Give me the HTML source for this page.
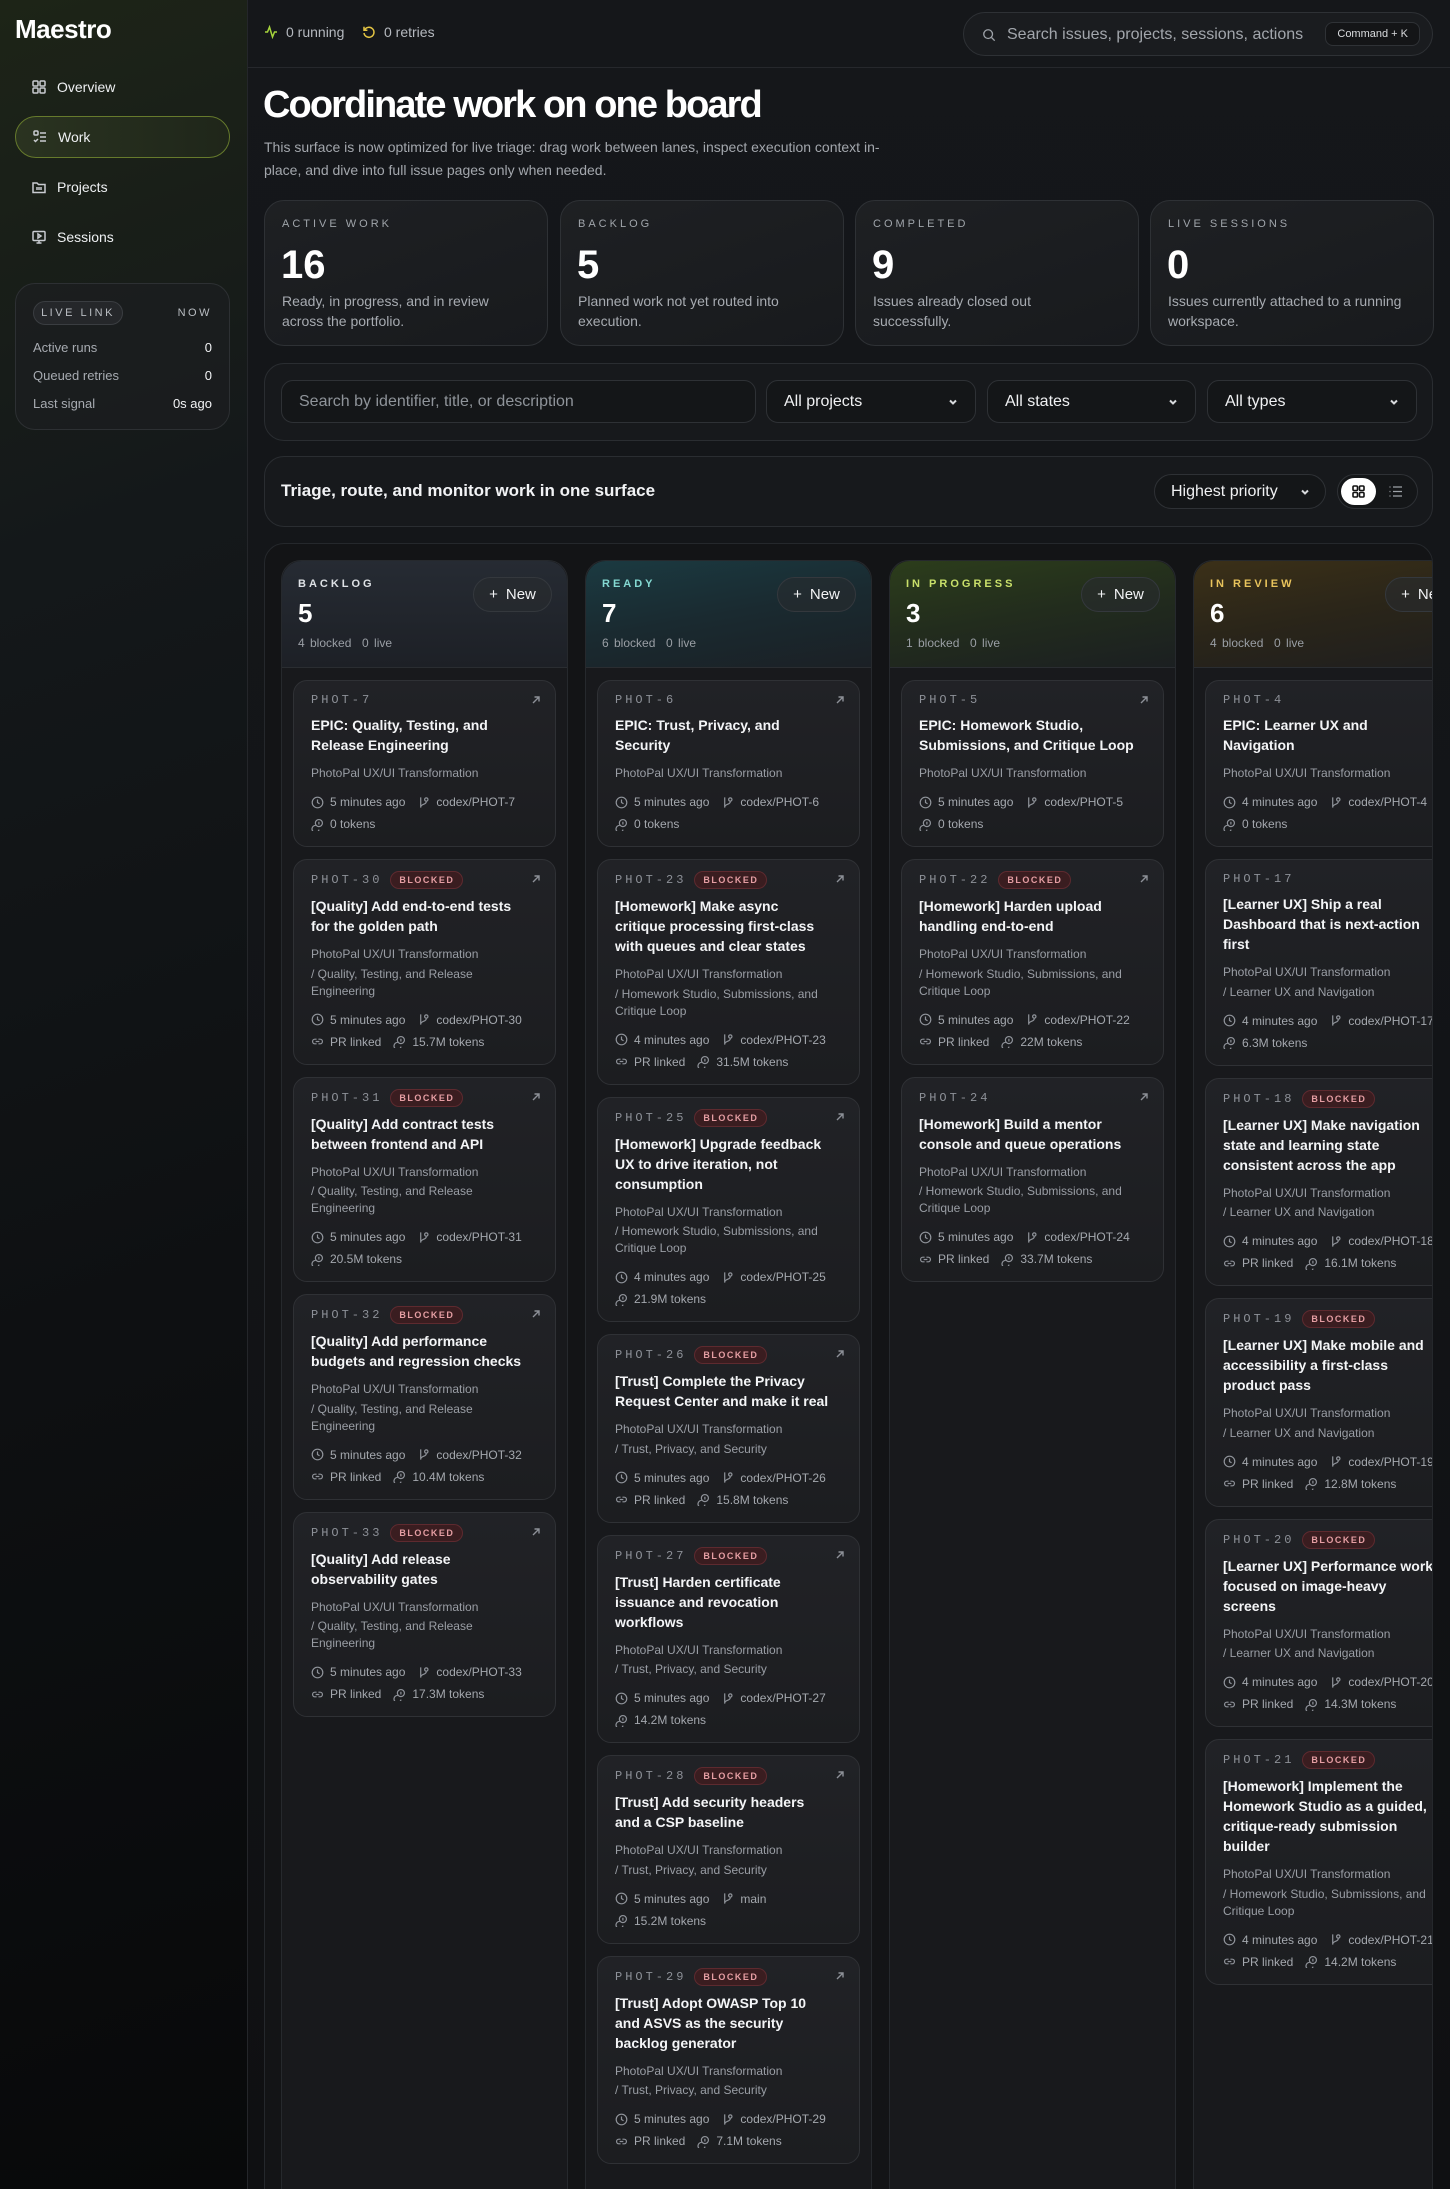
<!DOCTYPE html>
<html><head><meta charset="utf-8">
<style>
*{box-sizing:border-box;margin:0;padding:0}
html,body{width:1450px;height:2189px;overflow:hidden}
body{font-family:"Liberation Sans",Arial,sans-serif;background:#111214;color:#e8eaed;position:relative}
.abs{position:absolute}
#side{left:0;top:0;width:248px;height:2189px;border-right:1px solid #24262a;background:linear-gradient(160deg,#1d2417 0%,#14181a 25%,#0e1012 60%,#08090a 100%)}
#main{left:248px;top:0;width:1202px;height:2189px;background:linear-gradient(180deg,#15171a 0%,#131518 40%,#0f1012 100%)}
.logo{left:15px;top:14px;font-size:26px;font-weight:700;color:#fff;letter-spacing:-0.5px}
.nav{left:15px;width:215px;height:42px;display:flex;align-items:center;padding-left:16px;font-size:14px;color:#eef0f2;gap:10px}
.nav svg{width:16px;height:16px;stroke:#c9ccd1;fill:none;stroke-width:1.5}
.nav.active{border:1px solid #667a2c;border-radius:21px;background:linear-gradient(90deg,#2a3320,#1f261a)}
.live{left:15px;top:283px;width:215px;height:147px;border:1px solid #2d3033;border-radius:20px;background:rgba(28,30,33,.7)}
.pill{position:absolute;left:17px;top:17px;height:24px;width:90px;border:1px solid #3a3d41;border-radius:12px;background:#25272a;font-size:11px;letter-spacing:2.5px;color:#b9bdc2;display:flex;align-items:center;justify-content:center}
.now{position:absolute;right:17px;top:23px;font-size:11px;letter-spacing:2.5px;color:#b9bdc2}
.lrow{position:absolute;left:17px;right:17px;display:flex;justify-content:space-between;font-size:13px;color:#a7abb1}
.lrow b{font-weight:400;color:#f2f3f5}
#topline{left:248px;top:67px;width:1202px;height:1px;background:#26282c}
.tstat{top:24px;font-size:14px;color:#b5b9bf;display:flex;align-items:center;gap:8px}
.search{left:963px;top:12px;width:470px;height:44px;border:1px solid #2e3135;border-radius:22px;background:#1a1c1f}
.kbd{position:absolute;right:12px;top:9px;height:24px;padding:0 11px;border:1px solid #2f3236;border-radius:8px;background:#141517;font-size:11px;color:#d9dbde;display:flex;align-items:center}
h1{position:absolute;left:263px;top:84px;font-size:38px;font-weight:700;letter-spacing:-1.9px;color:#fff}
.desc{left:264px;top:136px;width:660px;font-size:14px;line-height:23px;color:#a3a7ad}
.stat{top:200px;width:284px;height:146px;border:1px solid #2e3135;border-radius:20px;background:linear-gradient(160deg,#1e2023,#181a1d)}
.stat .l{position:absolute;left:17px;top:17px;font-size:11px;letter-spacing:3px;color:#a0a5ab}
.stat .n{position:absolute;left:16px;top:42px;font-size:40px;font-weight:700;color:#fff}
.stat .d{position:absolute;left:17px;top:90px;font-size:14px;line-height:20px;color:#a7abb1;width:260px;white-space:nowrap}
.panel{border:1px solid #2a2d31;border-radius:20px;background:#17191c}
.inp{top:380px;height:43px;border:1px solid #2e3135;border-radius:12px;background:#141618;font-size:16px;display:flex;align-items:center;padding-left:17px}
.sel{justify-content:space-between;padding-right:16px;color:#f0f1f3}
.chev{width:12px;height:12px;stroke:#d8dadd;fill:none;stroke-width:2}
.board{left:264px;top:543px;width:1169px;height:1700px;border:1px solid #25282c;border-radius:20px;background:#131416;overflow:hidden}
.col{position:absolute;top:16px;width:287px;height:1700px;border:1px solid #26292d;border-radius:20px 20px 0 0;background:#18191c}
.hd{height:107px;border-bottom:1px solid #2a2d31;border-radius:20px 20px 0 0;position:relative}
.hd .l{position:absolute;left:16px;top:17px;font-size:11px;letter-spacing:3px;font-weight:700}
.hd .n{position:absolute;left:16px;top:37px;font-size:26px;font-weight:700;color:#fff}
.hd .s{position:absolute;left:16px;top:75px;font-size:12px;color:#9a9fa5;word-spacing:2px}
.new{position:absolute;left:191px;top:16px;width:79px;height:35px;border:1px solid #34383d;border-radius:18px;background:rgba(40,43,47,.6);font-size:15px;color:#f2f3f5;display:flex;align-items:center;justify-content:center;gap:8px}
.cards{padding:12px 11px 0 11px}
.card{position:relative;border:1px solid #2f3135;border-radius:14px;background:linear-gradient(180deg,#212226,#1c1d20);padding:10px 17px 11px 17px;margin-bottom:12px}
.id{height:18px;display:flex;align-items:center;gap:8px;font-family:"Liberation Mono",monospace;font-size:12px;letter-spacing:3px;color:#8d9198}
.id.b{height:20px}
.bl{font-family:"Liberation Sans",sans-serif;font-size:9px;font-weight:700;letter-spacing:1.5px;color:#e59ea3;background:#3a1d20;border:1px solid #5e2a2f;border-radius:9px;padding:3px 8px;line-height:10px}
.arr{position:absolute;right:14px;top:14px;width:10px;height:10px;stroke:#8d9198;fill:none;stroke-width:1.4}
.t{margin-top:6px;font-size:14px;font-weight:700;line-height:20px;color:#f4f5f7;white-space:nowrap}
.p{margin-top:10px;font-size:12px;line-height:17px;color:#9a9ea5;white-space:nowrap}
.pp{margin-top:2.5px;font-size:12px;line-height:17px;color:#9a9ea5;white-space:nowrap}
.m{margin-top:9px}
.mr{height:22px;display:flex;align-items:center;gap:12px;font-size:12px;color:#a4a8ae;white-space:nowrap}
.mr span{display:flex;align-items:center;gap:6px}
.mr svg{width:13px;height:13px;stroke:#8f939a;fill:none;stroke-width:1.3;flex:none}
</style></head><body>
<div id="side" class="abs"></div>
<div id="main" class="abs"></div>
<div class="abs logo">Maestro</div>

<div class="abs nav" style="top:66px"><svg viewBox="0 0 16 16"><rect x="2" y="2" width="5" height="5" rx="1"/><rect x="9" y="2" width="5" height="5" rx="1"/><rect x="2" y="9" width="5" height="5" rx="1"/><rect x="9" y="9" width="5" height="5" rx="1"/></svg>Overview</div>
<div class="abs nav active" style="top:116px"><svg viewBox="0 0 16 16"><rect x="2" y="2" width="4" height="4" rx="1"/><path d="M8 4h6M8 8h6M8 12h6M2 11l1.5 1.5L6 10"/></svg>Work</div>
<div class="abs nav" style="top:166px"><svg viewBox="0 0 16 16"><path d="M2 4h4l1.5 1.5H14v8H2z"/><path d="M6 8v3M8 8v3M10 8v3"/></svg>Projects</div>
<div class="abs nav" style="top:216px"><svg viewBox="0 0 16 16"><rect x="2" y="2.5" width="12" height="9" rx="1"/><path d="M7 5l3 2-3 2zM8 11.5v2.5M5.5 14h5"/></svg>Sessions</div>

<div class="abs live">
<div class="pill">LIVE LINK</div><div class="now">NOW</div>
<div class="lrow" style="top:56px">Active runs<b>0</b></div>
<div class="lrow" style="top:84px">Queued retries<b>0</b></div>
<div class="lrow" style="top:112px">Last signal<b>0s ago</b></div>
</div>

<div id="topline" class="abs"></div>
<div class="abs tstat" style="left:264px;top:24px"><svg width="14" height="14" viewBox="0 0 14 14" fill="none" stroke="#a6d43c" stroke-width="1.5"><path d="M1 7h2.5l2-5 3 10 2-5H13"/></svg>0 running</div>
<div class="abs tstat" style="left:362px;top:24px"><svg width="14" height="14" viewBox="0 0 14 14" fill="none" stroke="#e3c443" stroke-width="1.5"><path d="M2.5 5A5 5 0 1 1 2 8"/><path d="M2 1.8v3.4h3.4"/></svg>0 retries</div>

<div class="abs search">
<svg class="abs" style="left:18px;top:15px" width="14" height="14" viewBox="0 0 16 16" fill="none" stroke="#9ea3a9" stroke-width="1.5"><circle cx="7" cy="7" r="5"/><path d="M11 11l3.5 3.5"/></svg>
<div class="abs" style="left:43px;top:13px;font-size:16px;color:#a2a6ac">Search issues, projects, sessions, actions</div>
<div class="kbd">Command + K</div>
</div>

<h1>Coordinate work on one board</h1>
<div class="abs desc">This surface is now optimized for live triage: drag work between lanes, inspect execution context in-<br>place, and dive into full issue pages only when needed.</div>

<div class="abs stat" style="left:264px"><div class="l">ACTIVE WORK</div><div class="n">16</div><div class="d">Ready, in progress, and in review<br>across the portfolio.</div></div>
<div class="abs stat" style="left:560px"><div class="l">BACKLOG</div><div class="n">5</div><div class="d">Planned work not yet routed into<br>execution.</div></div>
<div class="abs stat" style="left:855px"><div class="l">COMPLETED</div><div class="n">9</div><div class="d">Issues already closed out<br>successfully.</div></div>
<div class="abs stat" style="left:1150px"><div class="l">LIVE SESSIONS</div><div class="n">0</div><div class="d">Issues currently attached to a running<br>workspace.</div></div>

<div class="abs panel" style="left:264px;top:363px;width:1169px;height:78px"></div>
<div class="abs inp" style="left:281px;width:475px;color:#8f949a">Search by identifier, title, or description</div>
<div class="abs inp sel" style="left:766px;width:210px">All projects<svg class="chev" viewBox="0 0 12 12"><path d="M3 4.5l3 3 3-3"/></svg></div>
<div class="abs inp sel" style="left:987px;width:209px">All states<svg class="chev" viewBox="0 0 12 12"><path d="M3 4.5l3 3 3-3"/></svg></div>
<div class="abs inp sel" style="left:1207px;width:210px">All types<svg class="chev" viewBox="0 0 12 12"><path d="M3 4.5l3 3 3-3"/></svg></div>

<div class="abs panel" style="left:264px;top:456px;width:1169px;height:71px"></div>
<div class="abs" style="left:281px;top:481px;font-size:17px;font-weight:700;color:#f2f3f5">Triage, route, and monitor work in one surface</div>
<div class="abs inp sel" style="left:1154px;top:474px;width:172px;height:35px;border-radius:18px;padding-left:16px;padding-right:14px;font-size:16px">Highest priority<svg class="chev" viewBox="0 0 12 12"><path d="M3 4.5l3 3 3-3"/></svg></div>
<div class="abs" style="left:1337px;top:474px;width:81px;height:35px;border:1px solid #2e3135;border-radius:18px;background:#141618"></div>
<div class="abs" style="left:1341px;top:478px;width:35px;height:27px;border-radius:14px;background:#fff"></div>
<svg class="abs" style="left:1351px;top:484px" width="15" height="15" viewBox="0 0 15 15" fill="none" stroke="#111" stroke-width="1.6"><rect x="2" y="2" width="4.5" height="4.5" rx="1"/><rect x="8.5" y="2" width="4.5" height="4.5" rx="1"/><rect x="2" y="8.5" width="4.5" height="4.5" rx="1"/><rect x="8.5" y="8.5" width="4.5" height="4.5" rx="1"/></svg>
<svg class="abs" style="left:1388px;top:484px" width="15" height="15" viewBox="0 0 15 15" fill="none" stroke="#9ea3a9" stroke-width="1.3"><path d="M5 3h9M5 7.5h9M5 12h9M1.5 3h1M1.5 7.5h1M1.5 12h1"/></svg>

<svg width="0" height="0" style="position:absolute">
<defs>
<symbol id="clk" viewBox="0 0 14 14"><circle cx="7" cy="7" r="5.7"/><path d="M7 3.8V7l2.2 1.4"/></symbol>
<symbol id="br" viewBox="0 0 14 14"><path d="M4 1.5v11M10 6c0 3.5-6 2.5-6 6"/><circle cx="10" cy="3.8" r="1.8"/></symbol>
<symbol id="lnk" viewBox="0 0 14 14"><path d="M6 4.5H4.2a2.5 2.5 0 0 0 0 5H6M8 4.5h1.8a2.5 2.5 0 0 1 0 5H8M5 7h4"/></symbol>
<symbol id="tok" viewBox="0 0 14 14"><circle cx="8.5" cy="5.5" r="3.8"/><path d="M8.5 4v3M5 8a3.8 3.8 0 1 0 3.6 4.5"/></symbol>
<symbol id="ar" viewBox="0 0 10 10"><path d="M2 8L8 2M3.5 2H8v4.5"/></symbol>
</defs></svg>

<div class="abs board">
<!-- BACKLOG -->
<div class="col" style="left:16px">
<div class="hd" style="background:linear-gradient(180deg,#262b33,#1d2026)"><div class="l" style="color:#dfe2e6">BACKLOG</div><div class="n">5</div><div class="s">4 blocked&nbsp; 0 live</div><div class="new">+ <span>New</span></div></div>
<div class="cards">
<div class="card"><div class="id">PHOT-7</div><svg class="arr"><use href="#ar"/></svg><div class="t">EPIC: Quality, Testing, and<br>Release Engineering</div><div class="p">PhotoPal UX/UI Transformation</div><div class="m"><div class="mr"><span><svg><use href="#clk"/></svg>5 minutes ago</span><span><svg><use href="#br"/></svg>codex/PHOT-7</span></div><div class="mr"><span><svg><use href="#tok"/></svg>0 tokens</span></div></div></div>
<div class="card"><div class="id b">PHOT-30<span class="bl">BLOCKED</span></div><svg class="arr"><use href="#ar"/></svg><div class="t">[Quality] Add end-to-end tests<br>for the golden path</div><div class="p">PhotoPal UX/UI Transformation</div><div class="pp">/ Quality, Testing, and Release<br>Engineering</div><div class="m"><div class="mr"><span><svg><use href="#clk"/></svg>5 minutes ago</span><span><svg><use href="#br"/></svg>codex/PHOT-30</span></div><div class="mr"><span><svg><use href="#lnk"/></svg>PR linked</span><span><svg><use href="#tok"/></svg>15.7M tokens</span></div></div></div>
<div class="card"><div class="id b">PHOT-31<span class="bl">BLOCKED</span></div><svg class="arr"><use href="#ar"/></svg><div class="t">[Quality] Add contract tests<br>between frontend and API</div><div class="p">PhotoPal UX/UI Transformation</div><div class="pp">/ Quality, Testing, and Release<br>Engineering</div><div class="m"><div class="mr"><span><svg><use href="#clk"/></svg>5 minutes ago</span><span><svg><use href="#br"/></svg>codex/PHOT-31</span></div><div class="mr"><span><svg><use href="#tok"/></svg>20.5M tokens</span></div></div></div>
<div class="card"><div class="id b">PHOT-32<span class="bl">BLOCKED</span></div><svg class="arr"><use href="#ar"/></svg><div class="t">[Quality] Add performance<br>budgets and regression checks</div><div class="p">PhotoPal UX/UI Transformation</div><div class="pp">/ Quality, Testing, and Release<br>Engineering</div><div class="m"><div class="mr"><span><svg><use href="#clk"/></svg>5 minutes ago</span><span><svg><use href="#br"/></svg>codex/PHOT-32</span></div><div class="mr"><span><svg><use href="#lnk"/></svg>PR linked</span><span><svg><use href="#tok"/></svg>10.4M tokens</span></div></div></div>
<div class="card"><div class="id b">PHOT-33<span class="bl">BLOCKED</span></div><svg class="arr"><use href="#ar"/></svg><div class="t">[Quality] Add release<br>observability gates</div><div class="p">PhotoPal UX/UI Transformation</div><div class="pp">/ Quality, Testing, and Release<br>Engineering</div><div class="m"><div class="mr"><span><svg><use href="#clk"/></svg>5 minutes ago</span><span><svg><use href="#br"/></svg>codex/PHOT-33</span></div><div class="mr"><span><svg><use href="#lnk"/></svg>PR linked</span><span><svg><use href="#tok"/></svg>17.3M tokens</span></div></div></div>
</div></div>

<!-- READY -->
<div class="col" style="left:320px">
<div class="hd" style="background:linear-gradient(170deg,#1b3a41 0%,#1a2a30 50%,#1b2025 100%)"><div class="l" style="color:#84d9d2">READY</div><div class="n">7</div><div class="s">6 blocked&nbsp; 0 live</div><div class="new">+ <span>New</span></div></div>
<div class="cards">
<div class="card"><div class="id">PHOT-6</div><svg class="arr"><use href="#ar"/></svg><div class="t">EPIC: Trust, Privacy, and<br>Security</div><div class="p">PhotoPal UX/UI Transformation</div><div class="m"><div class="mr"><span><svg><use href="#clk"/></svg>5 minutes ago</span><span><svg><use href="#br"/></svg>codex/PHOT-6</span></div><div class="mr"><span><svg><use href="#tok"/></svg>0 tokens</span></div></div></div>
<div class="card"><div class="id b">PHOT-23<span class="bl">BLOCKED</span></div><svg class="arr"><use href="#ar"/></svg><div class="t">[Homework] Make async<br>critique processing first-class<br>with queues and clear states</div><div class="p">PhotoPal UX/UI Transformation</div><div class="pp">/ Homework Studio, Submissions, and<br>Critique Loop</div><div class="m"><div class="mr"><span><svg><use href="#clk"/></svg>4 minutes ago</span><span><svg><use href="#br"/></svg>codex/PHOT-23</span></div><div class="mr"><span><svg><use href="#lnk"/></svg>PR linked</span><span><svg><use href="#tok"/></svg>31.5M tokens</span></div></div></div>
<div class="card"><div class="id b">PHOT-25<span class="bl">BLOCKED</span></div><svg class="arr"><use href="#ar"/></svg><div class="t">[Homework] Upgrade feedback<br>UX to drive iteration, not<br>consumption</div><div class="p">PhotoPal UX/UI Transformation</div><div class="pp">/ Homework Studio, Submissions, and<br>Critique Loop</div><div class="m"><div class="mr"><span><svg><use href="#clk"/></svg>4 minutes ago</span><span><svg><use href="#br"/></svg>codex/PHOT-25</span></div><div class="mr"><span><svg><use href="#tok"/></svg>21.9M tokens</span></div></div></div>
<div class="card"><div class="id b">PHOT-26<span class="bl">BLOCKED</span></div><svg class="arr"><use href="#ar"/></svg><div class="t">[Trust] Complete the Privacy<br>Request Center and make it real</div><div class="p">PhotoPal UX/UI Transformation</div><div class="pp">/ Trust, Privacy, and Security</div><div class="m"><div class="mr"><span><svg><use href="#clk"/></svg>5 minutes ago</span><span><svg><use href="#br"/></svg>codex/PHOT-26</span></div><div class="mr"><span><svg><use href="#lnk"/></svg>PR linked</span><span><svg><use href="#tok"/></svg>15.8M tokens</span></div></div></div>
<div class="card"><div class="id b">PHOT-27<span class="bl">BLOCKED</span></div><svg class="arr"><use href="#ar"/></svg><div class="t">[Trust] Harden certificate<br>issuance and revocation<br>workflows</div><div class="p">PhotoPal UX/UI Transformation</div><div class="pp">/ Trust, Privacy, and Security</div><div class="m"><div class="mr"><span><svg><use href="#clk"/></svg>5 minutes ago</span><span><svg><use href="#br"/></svg>codex/PHOT-27</span></div><div class="mr"><span><svg><use href="#tok"/></svg>14.2M tokens</span></div></div></div>
<div class="card"><div class="id b">PHOT-28<span class="bl">BLOCKED</span></div><svg class="arr"><use href="#ar"/></svg><div class="t">[Trust] Add security headers<br>and a CSP baseline</div><div class="p">PhotoPal UX/UI Transformation</div><div class="pp">/ Trust, Privacy, and Security</div><div class="m"><div class="mr"><span><svg><use href="#clk"/></svg>5 minutes ago</span><span><svg><use href="#br"/></svg>main</span></div><div class="mr"><span><svg><use href="#tok"/></svg>15.2M tokens</span></div></div></div>
<div class="card"><div class="id b">PHOT-29<span class="bl">BLOCKED</span></div><svg class="arr"><use href="#ar"/></svg><div class="t">[Trust] Adopt OWASP Top 10<br>and ASVS as the security<br>backlog generator</div><div class="p">PhotoPal UX/UI Transformation</div><div class="pp">/ Trust, Privacy, and Security</div><div class="m"><div class="mr"><span><svg><use href="#clk"/></svg>5 minutes ago</span><span><svg><use href="#br"/></svg>codex/PHOT-29</span></div><div class="mr"><span><svg><use href="#lnk"/></svg>PR linked</span><span><svg><use href="#tok"/></svg>7.1M tokens</span></div></div></div>
</div></div>

<!-- IN PROGRESS -->
<div class="col" style="left:624px">
<div class="hd" style="background:linear-gradient(170deg,#2c3d1b 0%,#222c1d 50%,#1b1f21 100%)"><div class="l" style="color:#c9e06a">IN PROGRESS</div><div class="n">3</div><div class="s">1 blocked&nbsp; 0 live</div><div class="new">+ <span>New</span></div></div>
<div class="cards">
<div class="card"><div class="id">PHOT-5</div><svg class="arr"><use href="#ar"/></svg><div class="t">EPIC: Homework Studio,<br>Submissions, and Critique Loop</div><div class="p">PhotoPal UX/UI Transformation</div><div class="m"><div class="mr"><span><svg><use href="#clk"/></svg>5 minutes ago</span><span><svg><use href="#br"/></svg>codex/PHOT-5</span></div><div class="mr"><span><svg><use href="#tok"/></svg>0 tokens</span></div></div></div>
<div class="card"><div class="id b">PHOT-22<span class="bl">BLOCKED</span></div><svg class="arr"><use href="#ar"/></svg><div class="t">[Homework] Harden upload<br>handling end-to-end</div><div class="p">PhotoPal UX/UI Transformation</div><div class="pp">/ Homework Studio, Submissions, and<br>Critique Loop</div><div class="m"><div class="mr"><span><svg><use href="#clk"/></svg>5 minutes ago</span><span><svg><use href="#br"/></svg>codex/PHOT-22</span></div><div class="mr"><span><svg><use href="#lnk"/></svg>PR linked</span><span><svg><use href="#tok"/></svg>22M tokens</span></div></div></div>
<div class="card"><div class="id b">PHOT-24</div><svg class="arr"><use href="#ar"/></svg><div class="t">[Homework] Build a mentor<br>console and queue operations</div><div class="p">PhotoPal UX/UI Transformation</div><div class="pp">/ Homework Studio, Submissions, and<br>Critique Loop</div><div class="m"><div class="mr"><span><svg><use href="#clk"/></svg>5 minutes ago</span><span><svg><use href="#br"/></svg>codex/PHOT-24</span></div><div class="mr"><span><svg><use href="#lnk"/></svg>PR linked</span><span><svg><use href="#tok"/></svg>33.7M tokens</span></div></div></div>
</div></div>

<!-- IN REVIEW -->
<div class="col" style="left:928px">
<div class="hd" style="background:linear-gradient(170deg,#3b3018 0%,#2a2519 50%,#1e1e1f 100%)"><div class="l" style="color:#e9c45c">IN REVIEW</div><div class="n">6</div><div class="s">4 blocked&nbsp; 0 live</div><div class="new">+ <span>New</span></div></div>
<div class="cards">
<div class="card"><div class="id">PHOT-4</div><svg class="arr"><use href="#ar"/></svg><div class="t">EPIC: Learner UX and<br>Navigation</div><div class="p">PhotoPal UX/UI Transformation</div><div class="m"><div class="mr"><span><svg><use href="#clk"/></svg>4 minutes ago</span><span><svg><use href="#br"/></svg>codex/PHOT-4</span></div><div class="mr"><span><svg><use href="#tok"/></svg>0 tokens</span></div></div></div>
<div class="card"><div class="id">PHOT-17</div><svg class="arr"><use href="#ar"/></svg><div class="t">[Learner UX] Ship a real<br>Dashboard that is next-action<br>first</div><div class="p">PhotoPal UX/UI Transformation</div><div class="pp">/ Learner UX and Navigation</div><div class="m"><div class="mr"><span><svg><use href="#clk"/></svg>4 minutes ago</span><span><svg><use href="#br"/></svg>codex/PHOT-17</span></div><div class="mr"><span><svg><use href="#tok"/></svg>6.3M tokens</span></div></div></div>
<div class="card"><div class="id b">PHOT-18<span class="bl">BLOCKED</span></div><svg class="arr"><use href="#ar"/></svg><div class="t">[Learner UX] Make navigation<br>state and learning state<br>consistent across the app</div><div class="p">PhotoPal UX/UI Transformation</div><div class="pp">/ Learner UX and Navigation</div><div class="m"><div class="mr"><span><svg><use href="#clk"/></svg>4 minutes ago</span><span><svg><use href="#br"/></svg>codex/PHOT-18</span></div><div class="mr"><span><svg><use href="#lnk"/></svg>PR linked</span><span><svg><use href="#tok"/></svg>16.1M tokens</span></div></div></div>
<div class="card"><div class="id b">PHOT-19<span class="bl">BLOCKED</span></div><svg class="arr"><use href="#ar"/></svg><div class="t">[Learner UX] Make mobile and<br>accessibility a first-class<br>product pass</div><div class="p">PhotoPal UX/UI Transformation</div><div class="pp">/ Learner UX and Navigation</div><div class="m"><div class="mr"><span><svg><use href="#clk"/></svg>4 minutes ago</span><span><svg><use href="#br"/></svg>codex/PHOT-19</span></div><div class="mr"><span><svg><use href="#lnk"/></svg>PR linked</span><span><svg><use href="#tok"/></svg>12.8M tokens</span></div></div></div>
<div class="card"><div class="id b">PHOT-20<span class="bl">BLOCKED</span></div><svg class="arr"><use href="#ar"/></svg><div class="t">[Learner UX] Performance work<br>focused on image-heavy<br>screens</div><div class="p">PhotoPal UX/UI Transformation</div><div class="pp">/ Learner UX and Navigation</div><div class="m"><div class="mr"><span><svg><use href="#clk"/></svg>4 minutes ago</span><span><svg><use href="#br"/></svg>codex/PHOT-20</span></div><div class="mr"><span><svg><use href="#lnk"/></svg>PR linked</span><span><svg><use href="#tok"/></svg>14.3M tokens</span></div></div></div>
<div class="card"><div class="id b">PHOT-21<span class="bl">BLOCKED</span></div><svg class="arr"><use href="#ar"/></svg><div class="t">[Homework] Implement the<br>Homework Studio as a guided,<br>critique-ready submission<br>builder</div><div class="p">PhotoPal UX/UI Transformation</div><div class="pp">/ Homework Studio, Submissions, and<br>Critique Loop</div><div class="m"><div class="mr"><span><svg><use href="#clk"/></svg>4 minutes ago</span><span><svg><use href="#br"/></svg>codex/PHOT-21</span></div><div class="mr"><span><svg><use href="#lnk"/></svg>PR linked</span><span><svg><use href="#tok"/></svg>14.2M tokens</span></div></div></div>
</div></div>
</div>
</body></html>
